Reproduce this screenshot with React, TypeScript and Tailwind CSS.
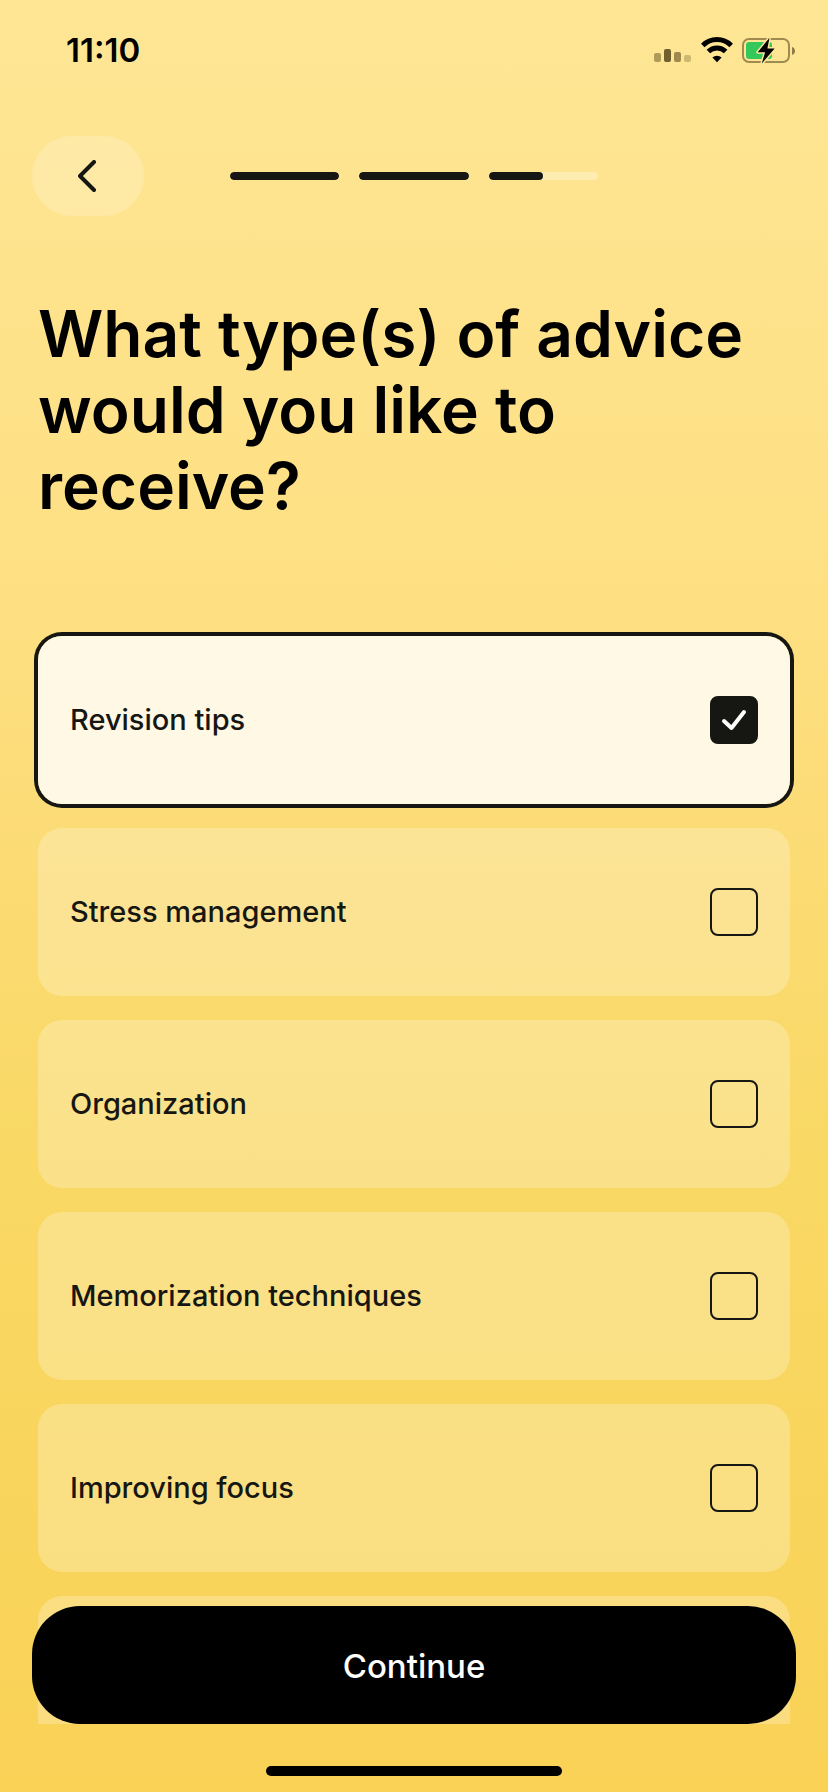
import { useState } from 'react'

const options = [
    'Revision tips',
    'Stress management',
    'Organization',
    'Memorization techniques',
    'Improving focus',
]

// progress of each onboarding section, in percent
const steps = [100, 100, 50]

function StatusBar() {
    return (
        <div className="flex h-[100px] shrink-0 items-center justify-between pl-[66px] pr-8">
            <span className="text-[33px] leading-10 font-semibold text-black">11:10</span>
            <div className="flex items-center gap-[9px]">
                <svg className="h-7 w-[38px]" viewBox="0 0 38 28" fill="#4d3d14">
                    <rect x="0" y="17" width="7" height="9" rx="2" opacity="0.45" />
                    <rect x="10" y="13" width="7" height="13" rx="2" opacity="0.8" />
                    <rect x="20" y="16" width="7" height="10" rx="2" opacity="0.55" />
                    <rect x="30" y="19" width="7" height="7" rx="2" opacity="0.27" />
                </svg>
                <svg className="h-7 w-8" viewBox="0 0 32 28">
                    <path d="M1.800 9.400a20 20 0 0 1 28.400 0" fill="none" stroke="#000" strokeWidth="5" />
                    <path d="M7.400 15.600a12.200 12.200 0 0 1 17.200 0" fill="none" stroke="#000" strokeWidth="5" />
                    <path d="M16 26.200l-4.600-4.600a6.600 6.600 0 0 1 9.200 0z" />
                </svg>
                <svg className="h-7 w-[54px]" viewBox="0 0 54 28">
                    <rect x="1" y="3" width="46" height="23" rx="6" fill="none" stroke="#a08a50" strokeWidth="2" />
                    <path d="M50 11v8c2-.6 3-2.200 3-4s-1-3.400-3-4z" fill="#8f7b48" />
                    <rect x="4" y="6" width="26" height="17" rx="3" fill="#34c759" />
                    <path
                        d="M27.500 1.800L15.700 16.200h7.400L19.800 27.500 32.600 12.500h-7.200z"
                        fill="#000"
                        stroke="#fee695"
                        strokeWidth="3"
                        strokeLinejoin="round"
                        paintOrder="stroke"
                    />
                </svg>
            </div>
        </div>
    )
}

export default function App() {
    const [selected, setSelected] = useState<string[]>(['Revision tips'])

    function toggle(option: string) {
        setSelected(prev =>
            prev.includes(option) ? prev.filter(o => o !== option) : [...prev, option]
        )
    }

    return (
        <div className="flex h-screen flex-col bg-[linear-gradient(to_bottom,#fee695,#fee083_33%,#fcdc77_45%,#f9d864_65%,#f9d256)] font-['Inter',sans-serif] text-[#161712]">
            <StatusBar />

            <header className="mt-9 grid shrink-0 grid-cols-[112px_1fr_112px] items-center px-8">
                <button
                    type="button"
                    aria-label="Back"
                    className="flex h-20 items-center justify-center rounded-[40px] bg-white/20"
                >
                    <svg className="h-8 w-5" viewBox="0 0 20 32" fill="none" stroke="currentColor" strokeWidth="4" strokeLinecap="round" strokeLinejoin="round">
                        <path d="M16 2L2 16l14 14" />
                    </svg>
                </button>
                <div className="mx-auto flex w-[368px] gap-5">
                    {steps.map((percent, i) => (
                        <div key={i} className="h-2 flex-1 overflow-hidden rounded-full bg-white/30">
                            <div className="h-full rounded-full bg-[#161712]" style={{ width: `${percent}%` }} />
                        </div>
                    ))}
                </div>
            </header>

            <h1 className="mt-20 mb-24 shrink-0 px-[38px] text-[64px] leading-[76px] font-semibold text-black">
                What type(s) of advice would you like to receive?
            </h1>

            <main className="relative min-h-0 flex-1">
                <div className="flex h-full flex-col gap-6 overflow-y-auto px-[38px] pt-4 [scrollbar-width:none]">
                    {options.map(option => (
                        <label
                            key={option}
                            className="flex h-[168px] shrink-0 cursor-pointer items-center justify-between rounded-3xl bg-white/24 px-8 has-checked:bg-white/80 has-checked:ring-4 has-checked:ring-[#161712]"
                        >
                            <span className="text-[29px] leading-10 font-medium">{option}</span>
                            <span className="relative flex size-12">
                                <input
                                    type="checkbox"
                                    checked={selected.includes(option)}
                                    onChange={() => toggle(option)}
                                    className="peer size-12 appearance-none rounded-lg border-2 border-[#161712] checked:bg-[#161712]"
                                />
                                <svg className="pointer-events-none absolute inset-0 hidden size-12 peer-checked:block" viewBox="0 0 48 48" fill="none" stroke="#fff" strokeWidth="4" strokeLinecap="round" strokeLinejoin="round">
                                    <path d="M14 25l7.500 7L34 16" />
                                </svg>
                            </span>
                        </label>
                    ))}
                    <div aria-hidden="true" className="h-[168px] shrink-0 rounded-3xl bg-white/24" />
                </div>
                <div className="absolute inset-x-0 bottom-0 px-8">
                    <button
                        type="button"
                        className="h-[118px] w-full rounded-[48px] bg-black pt-1 text-[33px] font-medium text-white"
                    >
                        Continue
                    </button>
                </div>
            </main>

            <footer className="flex shrink-0 justify-center pt-[42px] pb-4">
                <div className="h-[10px] w-[296px] rounded-full bg-black" />
            </footer>
        </div>
    )
}
